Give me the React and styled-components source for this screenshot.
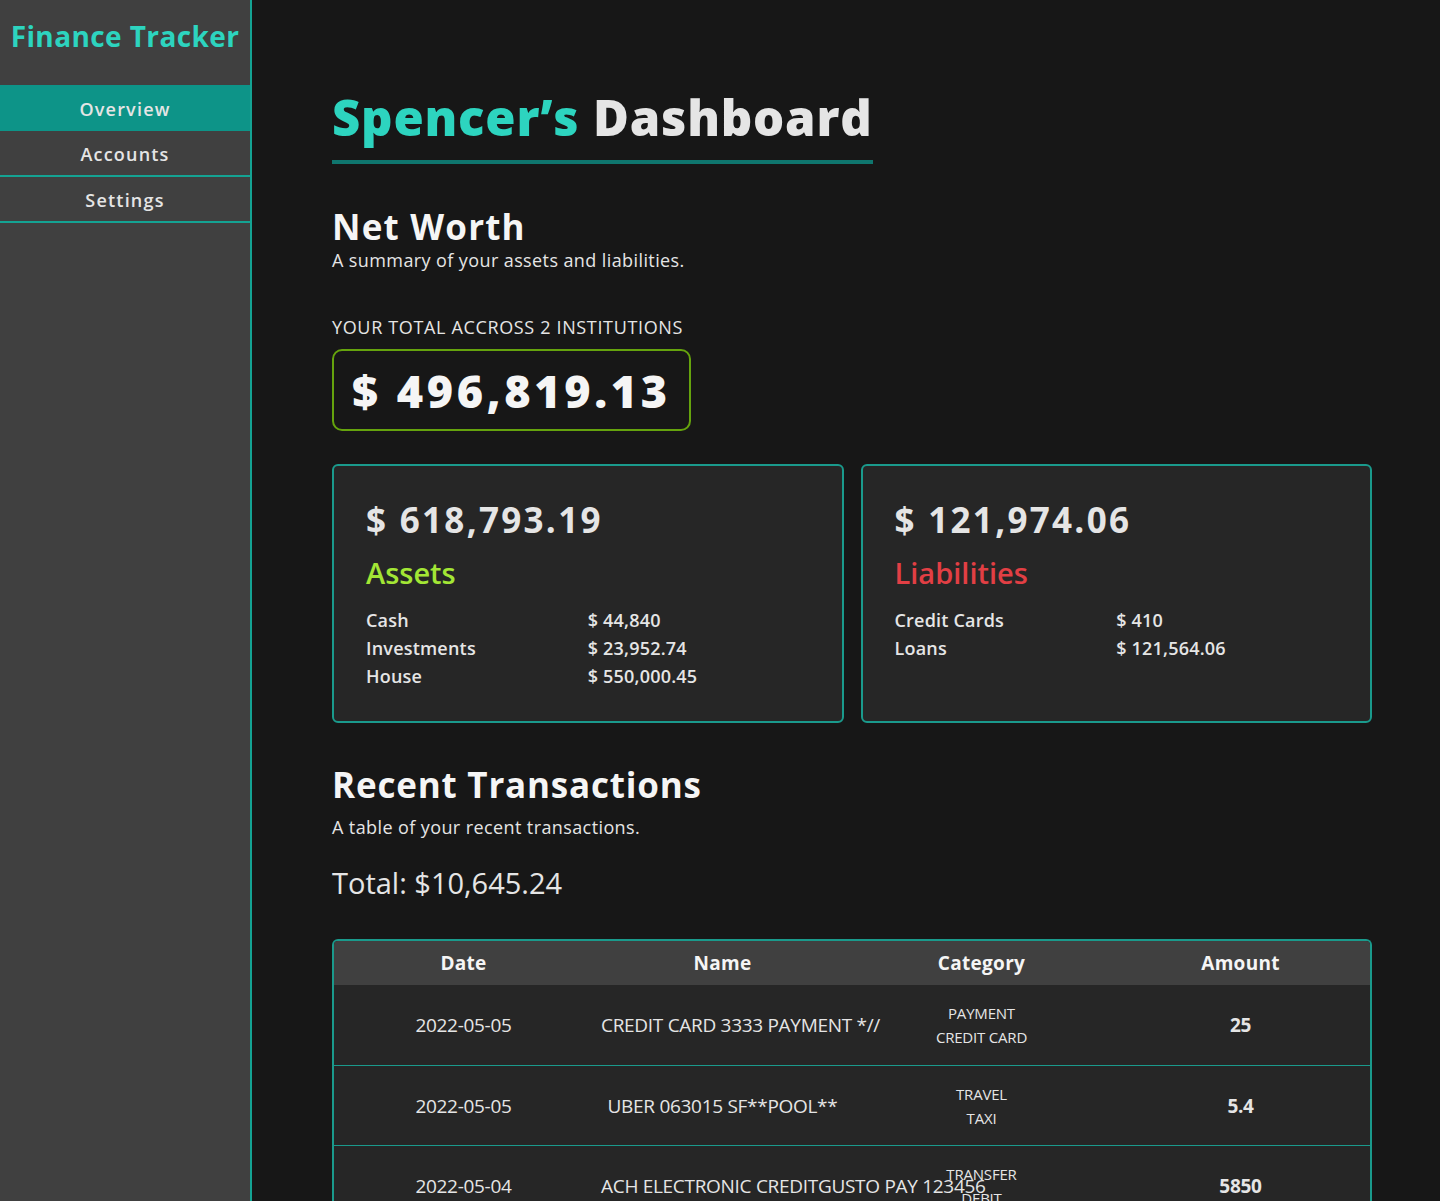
import styled, { createGlobalStyle } from "styled-components";

const GlobalStyle = createGlobalStyle`
  html, body {
    margin: 0;
    padding: 0;
    background: #171717;
    font-family: "Open Sans", "Noto Sans", sans-serif;
    color: #e5e5e5;
  }
`;

const Layout = styled.div`
  display: flex;
  min-height: 100vh;
  background: #171717;
`;

const Sidebar = styled.aside`
  width: 250px;
  flex-shrink: 0;
  background: #404040;
  border-right: 2px solid #14a393;
  display: flex;
  flex-direction: column;
`;

const Brand = styled.div`
  height: 85px;
  display: flex;
  align-items: center;
  justify-content: center;
  padding: 0 0 14px 0;
  box-sizing: border-box;
  font-size: 28px;
  font-weight: 700;
  color: #2dd4bf;
  letter-spacing: 0.4px;
`;

const NavItem = styled.a`
  display: flex;
  align-items: center;
  justify-content: center;
  height: 46px;
  padding-top: 2px;
  box-sizing: border-box;
  font-size: 18px;
  font-weight: 600;
  letter-spacing: 1.2px;
  color: #e5e5e5;
  background: ${p => (p.$active ? "#0d9488" : "transparent")};
  border-bottom: ${p => (p.$active ? "none" : "2px solid #14a393")};
  text-decoration: none;
`;

const Main = styled.main`
  flex: 1;
  padding: 86px 68px 0 80px;
`;

const Title = styled.h1`
  display: inline-block;
  margin: 0;
  padding-bottom: 12px;
  border-bottom: 4px solid #0f766e;
  font-size: 49px;
  font-weight: 800;
  letter-spacing: 0.8px;
  line-height: 62px;
  color: #e5e5e5;
`;

const Accent = styled.span`
  color: #2dd4bf;
`;

const SectionTitle = styled.h2`
  margin: 0;
  font-size: 35px;
  font-weight: 700;
  letter-spacing: ${p => p.$spacing ?? 1.2}px;
  line-height: 44px;
  color: #f5f5f5;
`;

const SectionHead = styled.div`
  margin-top: ${p => p.$top}px;
`;

const Subtitle = styled.p`
  margin: ${p => p.$gap ?? 0}px 0 0 0;
  font-size: 18px;
  line-height: 22px;
  letter-spacing: 0.4px;
  color: #e5e5e5;
`;

const Eyebrow = styled.div`
  margin-top: 44px;
  font-size: 18px;
  line-height: 24px;
  letter-spacing: 0.65px;
  color: #e5e5e5;
  text-transform: uppercase;
`;

const TotalBox = styled.div`
  display: inline-flex;
  align-items: center;
  margin-top: 10px;
  height: 82px;
  padding: 0 18px;
  box-sizing: border-box;
  border: 2px solid #65a30d;
  border-radius: 10px;
  font-size: 45px;
  font-weight: 800;
  letter-spacing: 3.6px;
  color: #f5f5f5;
`;

const Cards = styled.div`
  display: grid;
  grid-template-columns: 1fr 1fr;
  gap: 17px;
  margin-top: 33px;
`;

const Card = styled.div`
  background: #262626;
  border: 2px solid #1a9a8c;
  border-radius: 6px;
  height: 259px;
  box-sizing: border-box;
  padding: 30px 32px;
`;

const CardAmount = styled.div`
  font-size: 35px;
  font-weight: 700;
  letter-spacing: 2.3px;
  line-height: 48px;
  color: #e5e5e5;
`;

const CardLabel = styled.div`
  margin-top: 9px;
  font-size: 29px;
  font-weight: 600;
  line-height: 40px;
  color: ${p => p.$color};
`;

const Breakdown = styled.div`
  display: grid;
  grid-template-columns: 1fr 1fr;
  margin-top: 13px;
  font-size: 18px;
  font-weight: 600;
  letter-spacing: 0.2px;
  line-height: 28px;
  color: #e5e5e5;
`;

const BreakdownRow = styled.div`
  display: contents;
`;

const TotalLine = styled.div`
  margin-top: 25px;
  font-size: 29px;
  line-height: 40px;
  color: #e5e5e5;
`;

const Table = styled.table`
  width: 100%;
  margin-top: 36px;
  table-layout: fixed;
  border-collapse: separate;
  border-spacing: 0;
  border: 2px solid #1a9a8c;
  border-bottom: none;
  border-radius: 6px 6px 0 0;
  overflow: hidden;
`;

const Th = styled.th`
  height: 44px;
  padding: 0;
  background: #404040;
  font-size: 19px;
  font-weight: 700;
  letter-spacing: 0.3px;
  color: #f5f5f5;
  text-align: center;
`;

const Td = styled.td`
  height: ${p => (p.$first ? 80 : 79)}px;
  padding: 0 8px;
  background: #262626;
  border-top: ${p => (p.$first ? "none" : "1px solid #1a9a8c")};
  text-align: center;
  white-space: nowrap;
  font-size: 19px;
  font-weight: ${p => (p.$bold ? 700 : 400)};
  letter-spacing: -0.3px;
  color: #e5e5e5;
`;

const CategoryLine = styled.div`
  font-size: 15px;
  line-height: 24px;
  letter-spacing: -0.2px;
`;

const assets = [
  ["Cash", "$ 44,840"],
  ["Investments", "$ 23,952.74"],
  ["House", "$ 550,000.45"],
];

const liabilities = [
  ["Credit Cards", "$ 410"],
  ["Loans", "$ 121,564.06"],
];

const transactions = [
  { date: "2022-05-05", name: "CREDIT CARD 3333 PAYMENT *//", cat: ["PAYMENT", "CREDIT CARD"], amount: "25" },
  { date: "2022-05-05", name: "UBER 063015 SF**POOL**", cat: ["TRAVEL", "TAXI"], amount: "5.4" },
  { date: "2022-05-04", name: "ACH ELECTRONIC CREDITGUSTO PAY 123456", cat: ["TRANSFER", "DEBIT"], amount: "5850" },
  { date: "2022-05-03", name: "SPARKFUN", cat: ["SHOPS", "HOBBIES"], amount: "89.4" },
];

const nav = ["Overview", "Accounts", "Settings"];

export default function App() {
  return (
    <>
      <GlobalStyle />
      <Layout>
        <Sidebar>
          <Brand>Finance Tracker</Brand>
          {nav.map((n, i) => (
            <NavItem key={n} $active={i === 0}>{n}</NavItem>
          ))}
        </Sidebar>
        <Main>
          <Title>
            <Accent>Spencer’s</Accent> Dashboard
          </Title>

          <SectionHead $top={41}>
            <SectionTitle>Net Worth</SectionTitle>
            <Subtitle>A summary of your assets and liabilities.</Subtitle>
          </SectionHead>

          <Eyebrow>Your total accross 2 institutions</Eyebrow>
          <TotalBox>$ 496,819.13</TotalBox>

          <Cards>
            <Card>
              <CardAmount>$ 618,793.19</CardAmount>
              <CardLabel $color="#a3e635">Assets</CardLabel>
              <Breakdown>
                {assets.map(([k, v]) => (
                  <BreakdownRow key={k}>
                    <span>{k}</span>
                    <span>{v}</span>
                  </BreakdownRow>
                ))}
              </Breakdown>
            </Card>
            <Card>
              <CardAmount>$ 121,974.06</CardAmount>
              <CardLabel $color="#e23f44">Liabilities</CardLabel>
              <Breakdown>
                {liabilities.map(([k, v]) => (
                  <BreakdownRow key={k}>
                    <span>{k}</span>
                    <span>{v}</span>
                  </BreakdownRow>
                ))}
              </Breakdown>
            </Card>
          </Cards>

          <SectionHead $top={40}>
            <SectionTitle $spacing={0.8}>Recent Transactions</SectionTitle>
            <Subtitle $gap={9}>A table of your recent transactions.</Subtitle>
          </SectionHead>

          <TotalLine>Total: $10,645.24</TotalLine>

          <Table>
            <thead>
              <tr>
                <Th>Date</Th>
                <Th>Name</Th>
                <Th>Category</Th>
                <Th>Amount</Th>
              </tr>
            </thead>
            <tbody>
              {transactions.map((t, i) => (
                <tr key={i}>
                  <Td $first={i === 0}>{t.date}</Td>
                  <Td $first={i === 0}>{t.name}</Td>
                  <Td $first={i === 0}>
                    {t.cat.map(c => (
                      <CategoryLine key={c}>{c}</CategoryLine>
                    ))}
                  </Td>
                  <Td $first={i === 0} $bold>{t.amount}</Td>
                </tr>
              ))}
            </tbody>
          </Table>
        </Main>
      </Layout>
    </>
  );
}
